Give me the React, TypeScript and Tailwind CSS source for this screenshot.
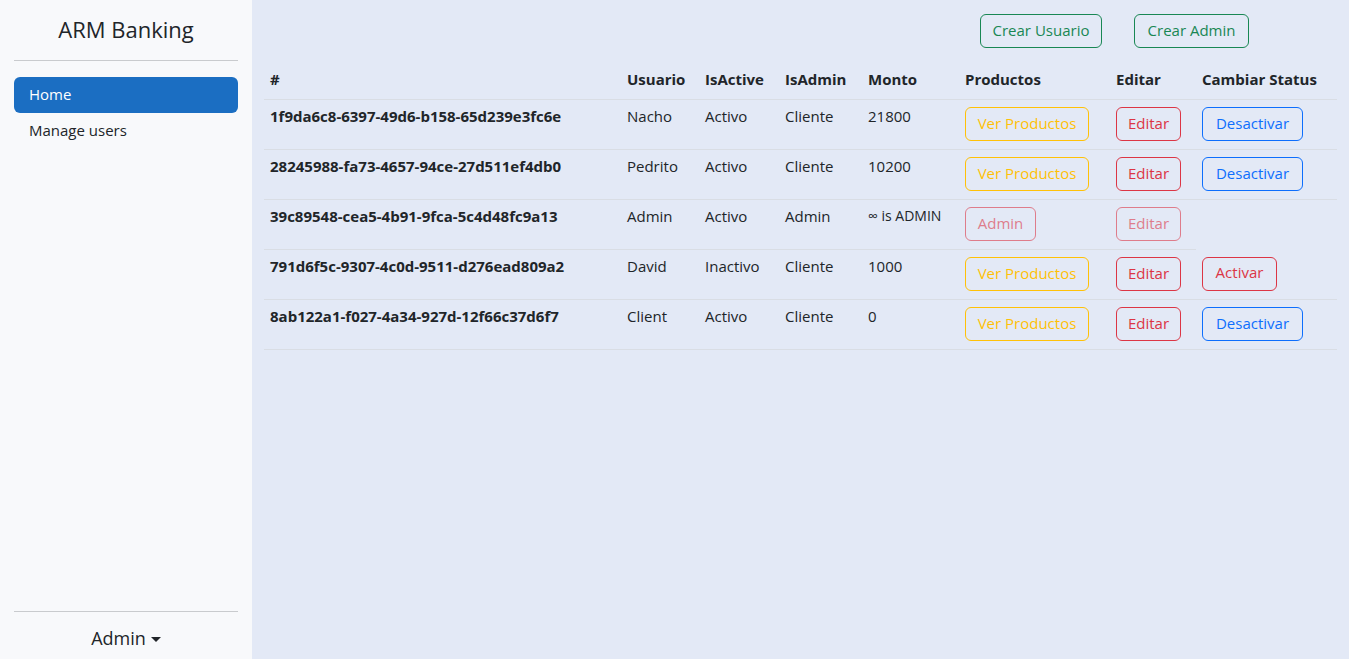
import React from 'react';

type Usuario = {
  id: string;
  nombre: string;
  activo: boolean;
  admin: boolean;
  monto: string;
};

const usuarios: Usuario[] = [
  { id: '1f9da6c8-6397-49d6-b158-65d239e3fc6e', nombre: 'Nacho', activo: true, admin: false, monto: '21800' },
  { id: '28245988-fa73-4657-94ce-27d511ef4db0', nombre: 'Pedrito', activo: true, admin: false, monto: '10200' },
  { id: '39c89548-cea5-4b91-9fca-5c4d48fc9a13', nombre: 'Admin', activo: true, admin: true, monto: '∞ is ADMIN' },
  { id: '791d6f5c-9307-4c0d-9511-d276ead809a2', nombre: 'David', activo: false, admin: false, monto: '1000' },
  { id: '8ab122a1-f027-4a34-927d-12f66c37d6f7', nombre: 'Client', activo: true, admin: false, monto: '0' },
];

const btn =
  'inline-flex items-center justify-center h-[34px] pb-[2px] rounded-[6px] border bg-transparent text-[15px] leading-none';

function Sidebar() {
  return (
    <aside className="w-[252px] shrink-0 h-screen bg-[#f8f9fb] flex flex-col px-[14px]">
      <div className="pt-[13px] pb-[14px] text-center text-[22px] leading-[33px] text-[#212529]">
        ARM Banking
      </div>
      <div className="h-px bg-[#c9cbce]" />
      <nav className="mt-[16px] flex flex-col">
        <a className="h-[36px] pb-[2px] flex items-center px-[15px] rounded-[6px] bg-[#1b6ec2] text-white text-[15px] font-medium">
          Home
        </a>
        <a className="h-[36px] pb-[2px] flex items-center px-[15px] text-[15px] text-[#212529]">Manage users</a>
      </nav>
      <div className="flex-1" />
      <div className="h-px bg-[#c9cbce]" />
      <div className="pt-[13px] pb-[7px] flex items-center justify-center text-[18px] leading-[27px] text-[#212529]">
        Admin
        <span className="ml-[5px] mt-[2px] w-0 h-0 border-x-[5px] border-x-transparent border-t-[5px] border-t-[#212529]" />
      </div>
    </aside>
  );
}

function UserRow({ u }: { u: Usuario }) {
  const td = 'px-[6px] pt-[4px] pb-[8px] align-top leading-[24px] border-b border-[#d9dde4]';
  return (
    <tr className="h-[50px]">
      <td className={`${td} font-bold`}>{u.id}</td>
      <td className={td}>{u.nombre}</td>
      <td className={td}>{u.activo ? 'Activo' : 'Inactivo'}</td>
      <td className={td}>{u.admin ? 'Admin' : 'Cliente'}</td>
      <td className={`${td} ${u.admin ? 'text-[14px]' : ''}`}>{u.monto}</td>
      <td className={td}>
        {u.admin ? (
          <button className={`${btn} mt-[3px] w-[71px] border-[#dc3545] text-[#dc3545] opacity-60`}>Admin</button>
        ) : (
          <button className={`${btn} mt-[3px] w-[124px] border-[#ffc107] text-[#ffc107]`}>Ver Productos</button>
        )}
      </td>
      <td className={td}>
        <button className={`${btn} mt-[3px] w-[65px] border-[#dc3545] text-[#dc3545] ${u.admin ? 'opacity-60' : ''}`}>
          Editar
        </button>
      </td>
      {!u.admin && (
        <td className={td}>
          {u.activo ? (
            <button className={`${btn} mt-[3px] w-[101px] border-[#0d6efd] text-[#0d6efd]`}>Desactivar</button>
          ) : (
            <button className={`${btn} mt-[3px] w-[75px] border-[#dc3545] text-[#dc3545]`}>Activar</button>
          )}
        </td>
      )}
    </tr>
  );
}

export default function App() {
  const th = 'px-[6px] pt-[4px] pb-[8px] text-left font-bold leading-[24px] border-b border-[#d9dde4]';
  return (
    <div
      className="flex h-screen overflow-hidden text-[15px] text-[#212529]"
      style={{ fontFamily: '"Open Sans", "Liberation Sans", sans-serif' }}
    >
      <Sidebar />
      <main className="flex-1 bg-[#e3e9f6] pl-[12px] pr-[12px]">
        <div className="flex justify-end gap-[32px] pt-[14px] pr-[88px]">
          <button className={`${btn} w-[122px] border-[#198754] text-[#198754]`}>Crear Usuario</button>
          <button className={`${btn} w-[115px] border-[#198754] text-[#198754]`}>Crear Admin</button>
        </div>
        <table className="mt-[15px] w-[1073px] table-fixed border-collapse">
          <colgroup>
            <col className="w-[357px]" />
            <col className="w-[78px]" />
            <col className="w-[80px]" />
            <col className="w-[83px]" />
            <col className="w-[97px]" />
            <col className="w-[151px]" />
            <col className="w-[86px]" />
            <col className="w-[141px]" />
          </colgroup>
          <thead>
            <tr>
              <th className={th}>#</th>
              <th className={th}>Usuario</th>
              <th className={th}>IsActive</th>
              <th className={th}>IsAdmin</th>
              <th className={th}>Monto</th>
              <th className={th}>Productos</th>
              <th className={th}>Editar</th>
              <th className={th}>Cambiar Status</th>
            </tr>
          </thead>
          <tbody>
            {usuarios.map((u) => (
              <UserRow key={u.id} u={u} />
            ))}
          </tbody>
        </table>
      </main>
    </div>
  );
}
